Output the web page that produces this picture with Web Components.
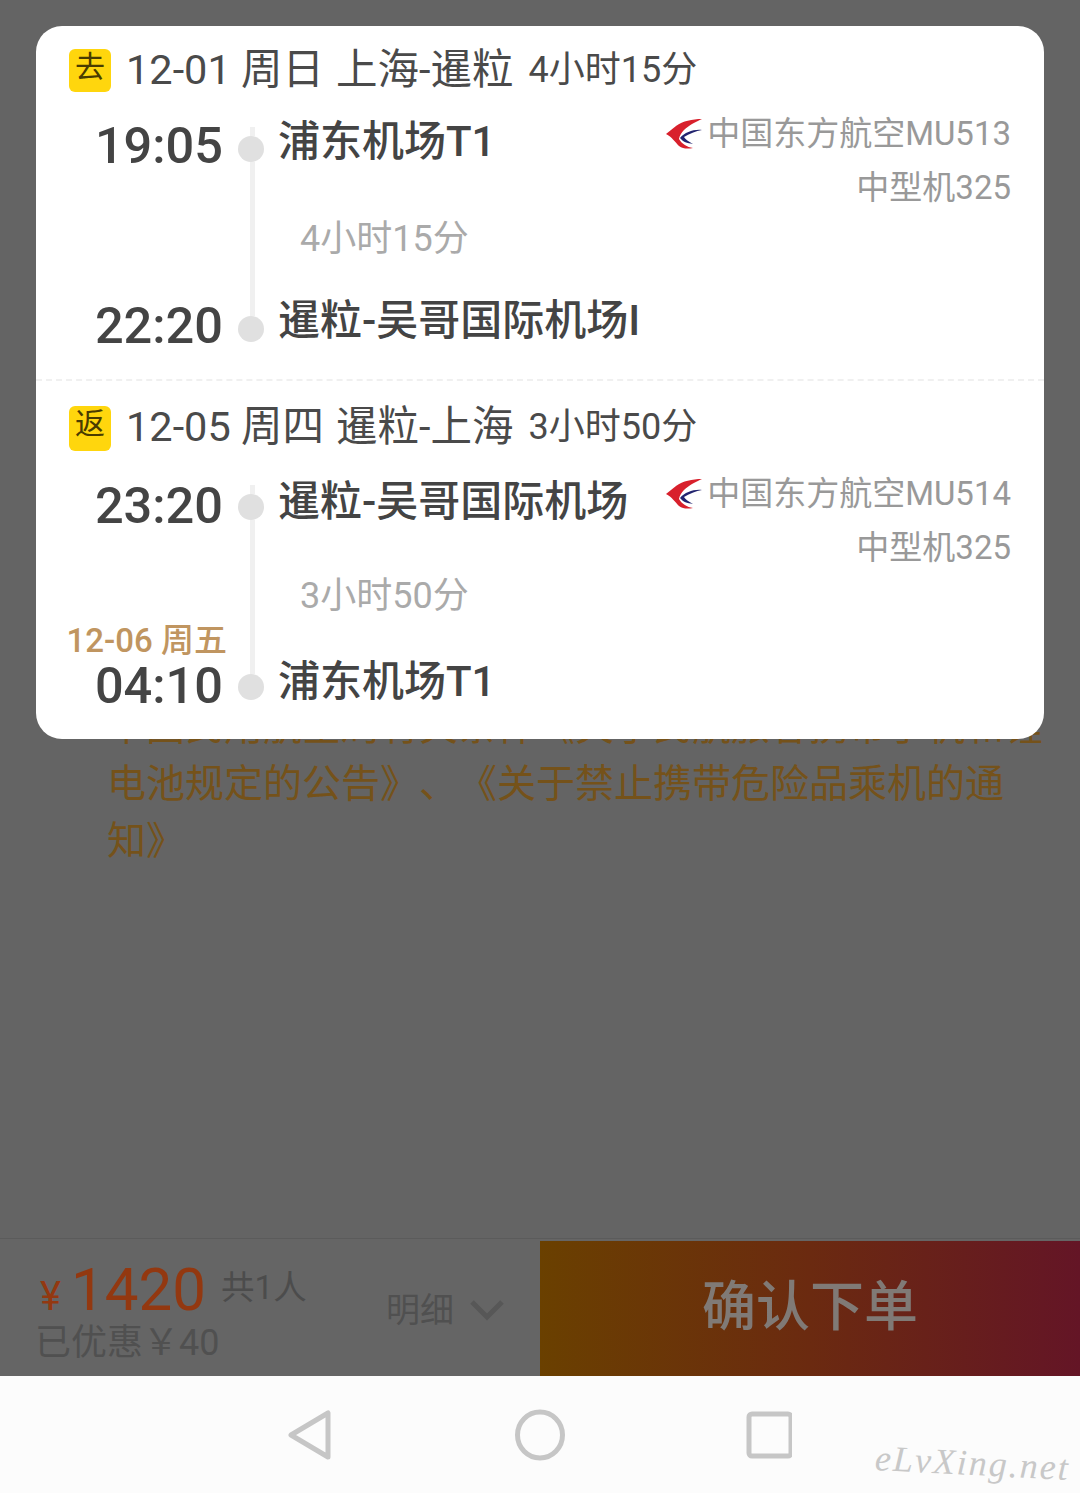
<!DOCTYPE html>
<html lang="zh-CN"><head><meta charset="utf-8"><title>行程</title>
<style>
html,body{margin:0;padding:0;height:1493px;overflow:hidden;background:#646464}
body{font-family:Roboto,"Noto Sans CJK SC",sans-serif;display:flex;flex-direction:column;position:relative}
</style></head><body>
<notice-area></notice-area>
<order-bar></order-bar>
<nav-bar></nav-bar>
<flight-card>
  <flight-leg tag="去" date="12-01 周日" route="上海-暹粒" total="4小时15分" dep="19:05" dep-air="浦东机场T1" airline="中国东方航空MU513" plane="中型机325" arr="22:20" arr-air="暹粒-吴哥国际机场I" head="84" style="--air:-3px;--dur:2px;--rail:17px;--railb:13px;--name3:5px;--tagh:43px;--tagm:4px"></flight-leg>
  <flight-leg tag="返" date="12-05 周四" route="暹粒-上海" total="3小时50分" dep="23:20" dep-air="暹粒-吴哥国际机场" airline="中国东方航空MU514" plane="中型机325" arr="04:10" arr-air="浦东机场T1" next="12-06 周五" head="89" divided style="--air:-3px;--dur:-1px;--rail:15px;--railb:15px;--name3:4px;--tagh:45px;--tagm:5px"></flight-leg>
</flight-card>
<script>
function shadow(el,html){el.attachShadow({mode:'open'}).innerHTML=html}
customElements.define('notice-area',class extends HTMLElement{connectedCallback(){shadow(this,`<style>
:host{display:block;flex:0 0 1238px;box-sizing:border-box;padding:699px 0 0 107px;color:#75521a;font-size:39px;line-height:57px;overflow:hidden;white-space:nowrap;text-spacing-trim:space-all}
p{margin:0}</style><p>中国民用航空局有关条件《关于民航旅客携带手机和锂<br>电池规定的公告》、《关于禁止携带危险品乘机的通<br>知》</p>`)}});
customElements.define('flight-card',class extends HTMLElement{connectedCallback(){shadow(this,`<style>
:host{position:absolute;left:36px;top:26px;width:1008px;height:713px;background:#fff;border-radius:26px;display:block;overflow:hidden}
</style><slot></slot>`)}});
const LOGO=`<svg width="36" height="30" viewBox="0 0 36 30" aria-hidden="true"><path d="M36 0C26 0 17 2 10 7L0 15C6 18 9 23 13 27C17 30 22 30 27 29C21 28 16 25 13 20C14 13 21 8 26 5C30 3 33 1 36 0Z" fill="#d8202c"/><path d="M36 11C28 10 19 13 14 19C17 23 21 24 27 25C22 22 19 20 18 18C23 15 30 12 36 11Z" fill="#22246f"/></svg>`;
customElements.define('flight-leg',class extends HTMLElement{connectedCallback(){const a=n=>this.getAttribute(n)||'';shadow(this,`<style>
:host{display:block;color:#444;position:relative}
:host([divided]) {border-top:2px dashed #f0f0f0}
.head{height:${a('head')}px;display:flex;align-items:center;padding-left:33px;white-space:nowrap;color:#4a4a4a;font-size:41.500px}
.head span:not(.tag){margin-bottom:5px}
.tag{width:42px;height:var(--tagh);background:#ffd60d;border-radius:6px;color:#4a3c00;font-size:30px;line-height:36px;text-align:center;margin:var(--tagm) 15px 0 0;flex:none}
.date{margin-right:12px}.route{margin-right:15px}.head .total{font-size:36px}
.grid{display:grid;grid-template-columns:186px 56px 1fr;grid-template-rows:104px 46px 95px;padding-bottom:24px}
.time{font-size:50.500px;font-weight:500;line-height:60px;text-align:right;color:#444;margin-right:-1px}
.t1{grid-area:1/1;padding-top:6px}.t3{grid-area:3/1;align-self:end;display:flex;flex-direction:column;align-items:flex-end;margin-bottom:-1px}
.next{font-size:33px;line-height:36px;color:#c09560;white-space:nowrap;margin-right:-4px;margin-bottom:-3px}
.rail{grid-area:1/2/4/3;display:flex;flex-direction:column;align-items:flex-start;padding:var(--rail) 0 var(--railb) 16px}
.rail i{display:block;width:5px;background:#f0f0f0;margin-left:12px}
.rail i.s{height:9px}.rail i.l{flex:1}
.rail b{display:block;width:26px;height:26px;border-radius:50%;background:#e0e0e0;flex:none}
.name{font-size:42px;line-height:60px;color:#444;white-space:nowrap;font-weight:500}
.n1{grid-area:1/3;padding-top:2px}.n3{grid-area:3/3;align-self:end;padding-bottom:var(--name3);margin-bottom:-1px}
.air{grid-area:1/3;justify-self:end;margin:var(--air) 33px 0 0;font-size:33px;line-height:54px;color:#999;text-align:right;white-space:nowrap}
.air div:first-child{display:flex;align-items:center;justify-content:flex-end}
.air svg{margin-right:5px}
.dur{grid-area:2/3;font-size:36px;line-height:46px;color:#aaa;padding-left:22px;margin-top:var(--dur)}
</style>
<div class="head"><span class="tag">${a('tag')}</span><span class="date">${a('date')}</span><span class="route">${a('route')}</span><span class="total">${a('total')}</span></div>
<div class="grid">
<div class="time t1">${a('dep')}</div>
<div class="rail"><i class="s"></i><b></b><i class="l"></i><b></b></div>
<div class="name n1">${a('dep-air')}</div>
<div class="air"><div>${LOGO}<span>${a('airline')}</span></div><div>${a('plane')}</div></div>
<div class="dur">${a('total')}</div>
<div class="time t3">${a('next')?`<span class="next">${a('next')}</span>`:''}<span>${a('arr')}</span></div>
<div class="name n3">${a('arr-air')}</div>
</div>`)}});
customElements.define('order-bar',class extends HTMLElement{connectedCallback(){shadow(this,`<style>
:host{display:flex;flex:0 0 138px;box-sizing:border-box;border-top:1px solid #5b5b5b;background:#656565}
.l{width:540px;flex:none;display:flex;box-sizing:border-box;padding:20px 0 0 37px;position:relative}
.info{width:349px}
.p{display:flex;align-items:baseline;height:62px;color:#933810;white-space:nowrap}
.y{font-size:40px;margin:0 10px 0 3px}
.n{font-size:60px;line-height:62px}
.c{font-size:33.500px;color:#4c4c4c;margin-left:15px;position:relative;top:-11px}
.o{font-size:36px;line-height:44px;color:#505050;white-space:nowrap;margin:0 0 0 -2px}
.d{display:flex;align-items:center;height:96px;font-size:34px;color:#505050;white-space:nowrap}
.d svg{margin-left:15px;margin-top:6px}
.b{flex:1;margin-top:2px;background:linear-gradient(90deg,#6a4000 0%,#6b2a10 50%,#641526 100%);display:flex;align-items:center;justify-content:center;color:#807a76;font-size:54px;font-weight:500;padding-bottom:12px;box-sizing:border-box}
</style><div class="l"><div class="info"><div class="p"><span class="y">¥</span><span class="n">1420</span><span class="c">共1人</span></div><div class="o">已优惠￥40</div></div>
<div class="d">明细<svg width="36" height="22" viewBox="0 0 36 22"><path d="M3 3L18 18L33 3" fill="none" stroke="#575757" stroke-width="5"/></svg></div></div>
<div class="b">确认下单</div>`)}});
customElements.define('nav-bar',class extends HTMLElement{connectedCallback(){shadow(this,`<style>
:host{display:flex;flex:1;background:#fcfcfc;position:relative;justify-content:center;box-sizing:border-box;padding-top:33px}
.r{display:flex;height:54px;margin-left:-1px}
.w{position:absolute;right:10px;top:66px;font:italic 36px "Liberation Serif",serif;color:#c8c8c8;letter-spacing:2px;transform:rotate(3deg);white-space:nowrap}
svg{display:block}
</style><div class="r">
<svg width="504" height="54" viewBox="-2 0 504 54" fill="none" stroke="#c6c6c6"><path d="M38 4L38 48L1 26Z" stroke-width="5" stroke-linejoin="round"/><ellipse cx="250" cy="26" rx="22.500" ry="23" stroke-width="5"/><rect x="459" y="5" width="42" height="42" rx="3" stroke-width="5"/></svg></div><div class="w">eLvXing.net</div>`)}});
</script></body></html>
